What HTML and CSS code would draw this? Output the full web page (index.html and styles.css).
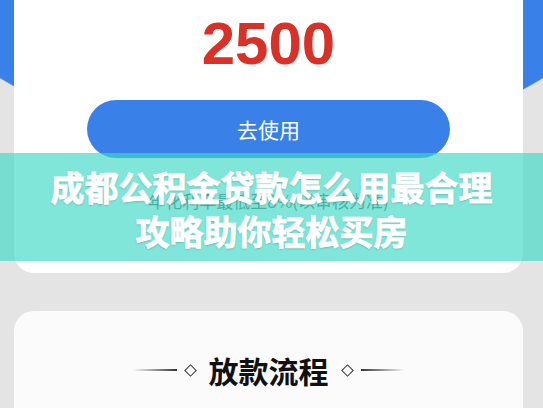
FILE: index.html
```html
<!DOCTYPE html>
<html lang="zh-CN">
  <head>
    <meta charset="UTF-8" />
    <meta name="viewport" content="width=device-width, initial-scale=1.0" />
    <title>成都公积金贷款怎么用最合理</title>
    <link rel="stylesheet" href="styles.css">
  </head>
  <body>
    <div class="page">
      <!-- quota card, its top runs off the screen -->
      <div class="card quota">
        <div class="amount">2500</div>
        <button class="use-btn">去使用</button>
        <div class="rate">年化利率最低至8%(以审核为准)</div>
      </div>

      <div class="card flow">
        <div class="flow-title">
          <span class="line left"></span>
          <span class="diamond"></span>
          <span class="flow-text">放款流程</span>
          <span class="diamond"></span>
          <span class="line right"></span>
        </div>
      </div>

      <!-- article title strip laid over the page -->
      <div class="banner">
        <div>成都公积金贷款怎么用最合理</div>
        <div>攻略助你轻松买房</div>
      </div>
    </div>
  </body>
</html>
```

FILE: styles.css
```css
* {
  box-sizing: border-box;
}
body {
  margin: 0;
  background: #e4e4e5;
  font-family: "Noto Sans CJK SC", "Noto Sans", sans-serif;
}
.page {
  position: relative;
  width: 543px;
  height: 408px;
  overflow: hidden;
  padding: 0 20px 0 14px;
  /* blue header curve behind the first card */
  background: radial-gradient(ellipse 420px 300px at 50% -150px, #3a80e9 99.6%, transparent 100%);
}
.card {
  background: #fff;
  border-radius: 20px;
}
.quota {
  border-radius: 0 0 20px 20px;
  height: 273px;
  padding-top: 12px;
  display: flex;
  flex-direction: column;
  align-items: center;
}
.amount {
  font-family: "Liberation Sans", Arial, sans-serif;
  font-weight: bold;
  font-size: 60px;
  line-height: 64px;
  color: #d93128;
}
.use-btn {
  margin-top: 24px;
  width: 363px;
  height: 58px;
  border: none;
  border-radius: 29px;
  background: #3a80e9;
  color: #fff;
  font-family: inherit;
  font-size: 21px;
}
.rate {
  margin-top: 31px;
  font-size: 17px;
  line-height: 24px;
  color: #666;
}
.flow {
  margin-top: 38px;
  height: 140px;
  background: #fbfbfb;
  padding-top: 39px;
}
.flow-title {
  display: flex;
  justify-content: center;
  align-items: center;
  height: 40px;
}
.flow-text {
  font-size: 30px;
  font-weight: bold;
  color: #111;
  margin: 0 14px;
  line-height: 40px;
}
.line {
  width: 44px;
  height: 2px;
}
.line.left {
  background: linear-gradient(to right, rgba(40, 40, 40, 0), #333);
  margin-right: 9px;
}
.line.right {
  background: linear-gradient(to left, rgba(40, 40, 40, 0), #333);
  margin-left: 9px;
}
.diamond {
  width: 9px;
  height: 9px;
  border: 1.5px solid #333;
  transform: rotate(45deg);
}
.banner {
  position: absolute;
  left: 0;
  right: 0;
  top: 153px;
  height: 108px;
  background: rgba(60, 217, 198, 0.65);
  display: flex;
  flex-direction: column;
  justify-content: center;
  align-items: center;
  padding-top: 4px;
  color: #fff;
  font-size: 34px;
  font-weight: bold;
  line-height: 44px;
  /* heavier strokes than the bold face gives */
  -webkit-text-stroke: 0.8px #fff;
  text-shadow: 0 1px 2px rgba(0, 0, 0, 0.25);
}
```
